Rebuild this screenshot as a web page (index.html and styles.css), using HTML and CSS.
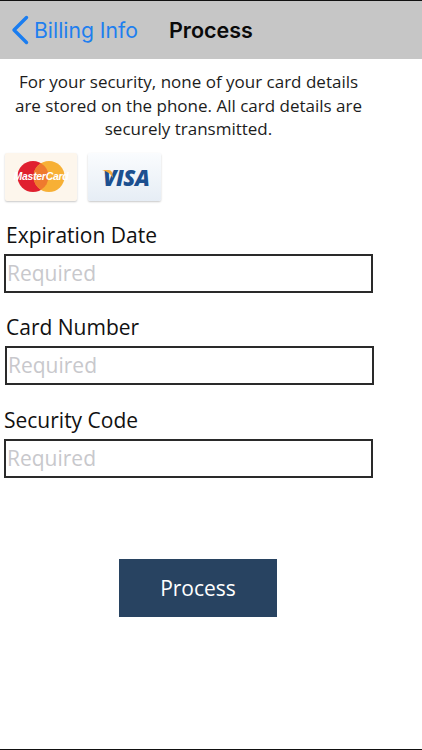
FILE: index.html
```html
<!DOCTYPE html>
<html lang="en">
<head>
<meta charset="utf-8">
<title>Process</title>
<link rel="stylesheet" href="styles.css">
</head>
<body>
<div class="screen">
  <header class="nav">
    <a class="back">
      <svg class="chevron" width="20" height="30" viewBox="0 0 20 30"><path d="M16.5 2.5 L4 15 L16.5 27.5" fill="none" stroke="#1a7df0" stroke-width="3.4" stroke-linecap="round" stroke-linejoin="round"/></svg>
      <span>Billing Info</span>
    </a>
    <h1 class="title">Process</h1>
  </header>
  <p class="notice">For your security, none of your card details are stored on the phone. All card details are securely transmitted.</p>
  <div class="cards">
    <div class="card card-mc">
      <svg width="72" height="48" viewBox="0 0 72 48">
        <circle cx="28" cy="23.5" r="15.5" fill="#e0202f"/>
        <circle cx="44" cy="23.5" r="15.5" fill="#f7b035"/>
        <path d="M36 10.2 A15.5 15.5 0 0 1 36 36.8 A15.5 15.5 0 0 1 36 10.2 Z" fill="#ef7a2e"/>
        <text x="36" y="27" text-anchor="middle" class="mc-text">MasterCard</text>
      </svg>
    </div>
    <div class="card card-visa">
      <svg width="73" height="48" viewBox="0 0 73 48">
        <text x="15" y="33" class="visa">VISA</text>
        <path d="M14 17 H21 Q23.5 17 24 19.5 L25 25 Q22 19 14 17 Z" fill="#f2a93b"/>
      </svg>
    </div>
  </div>
  <div class="field field-a">
    <label class="label label-a" for="exp">Expiration Date</label>
    <input class="input input-a" id="exp" placeholder="Required">
  </div>
  <div class="field field-b">
    <label class="label label-a" for="num">Card Number</label>
    <input class="input input-b" id="num" placeholder="Required">
  </div>
  <div class="field field-c">
    <label class="label label-c" for="sec">Security Code</label>
    <input class="input input-a" id="sec" placeholder="Required">
  </div>
  <div class="actions"><button class="process">Process</button></div>
</div>
</body>
</html>
```
FILE: styles.css
```css
* { box-sizing: border-box; }
html, body { margin: 0; padding: 0; background: #fff; }
body { font-family: "Open Sans", sans-serif; color: #111; }
.screen {
  width: 422px; height: 750px; overflow: hidden;
  border-top: 1px solid #111; border-bottom: 1px solid #111;
  display: flex; flex-direction: column;
}
.nav {
  height: 58px; background: #c6c6c6; flex: none;
  display: flex; align-items: center;
  font-family: Inter, sans-serif;
}
.back { display: flex; align-items: center; color: #1f7fef; font-size: 21.2px; padding-left: 10px; width: 169px; }
.chevron { flex: none; margin-right: 4px; }
.title { margin: 0; font-size: 21.5px; font-weight: 600; color: #0a0a0a; }
.notice {
  margin: 11px 0 0; padding: 0 55px 0 10px;
  font-size: 17px; line-height: 23.5px; text-align: center; color: #1c1c1c;
}
.cards { display: flex; gap: 11px; margin: 12px 0 0 5px; }
.card {
  width: 72px; height: 48px; border-radius: 2px;
  box-shadow: 0 1px 2px rgba(0,0,0,.22);
  display: flex; align-items: center; justify-content: center;
}
.card-mc { background: #fdf6ec; }
.card-visa { width: 73px; background: linear-gradient(#fafcfe, #e6edf5); }
.mc-text { font-family: "Liberation Sans", sans-serif; font-size: 10.5px; font-weight: 700; font-style: italic; fill: #fff; letter-spacing: -.3px; }
.visa { font-family: "Open Sans", sans-serif; font-weight: 800; font-style: italic; font-size: 22px; fill: #1b4f8f; letter-spacing: -.5px; }
.field { display: flex; flex-direction: column; }
.field-a { margin-top: 20px; }
.field-b { margin-top: 20px; }
.field-c { margin-top: 21px; }
.label { font-size: 21px; line-height: 28px; color: #111; }
.label-a { margin-left: 6px; }
.label-c { margin-left: 4px; }
.input {
  width: 369px; height: 39px; margin-top: 5px;
  border: 2px solid #2a2a2a; border-radius: 0; outline: none; background: #fff;
  font-family: "Open Sans", sans-serif; font-size: 21px; padding: 0 1px; color: #111;
}
.input::placeholder { color: #c8c8cc; opacity: 1; }
.input-a { margin-left: 4px; }
.input-b { margin-left: 5px; }
.actions { margin: 81px 0 0 119px; }
.process {
  width: 158px; height: 58px; border: 0; background: #284361; color: #fff;
  font-family: "Open Sans", sans-serif; font-size: 21px;
}
```
